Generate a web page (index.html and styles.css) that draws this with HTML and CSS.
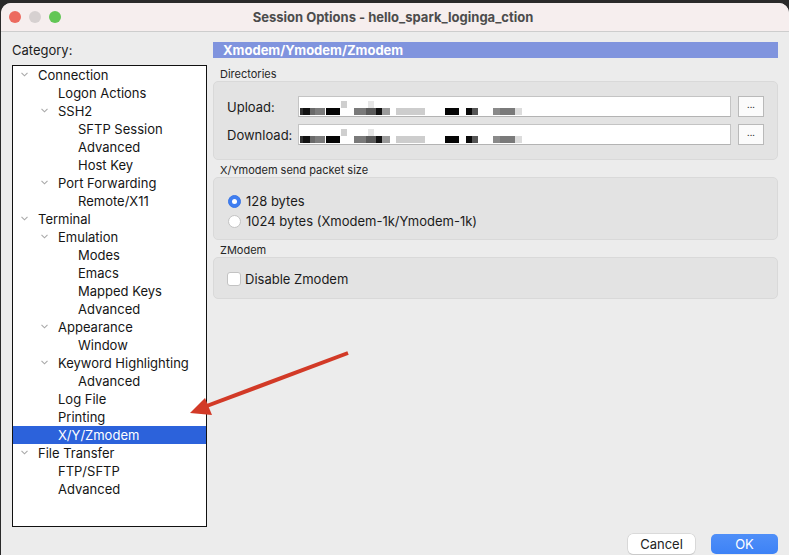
FILE: index.html
```html
<!DOCTYPE html>
<html>
<head>
<meta charset="utf-8">
<link rel="stylesheet" href="styles.css">
</head>
<body>
<div class="window">
  <div class="titlebar">
    <div class="lights">
      <span class="light red"></span>
      <span class="light gray"></span>
      <span class="light green"></span>
    </div>
    <div class="title">Session Options - hello_spark_loginga_ction</div>
  </div>
  <div class="body">
    <div class="main">
      <div class="left">
        <div class="cat-label">Category:</div>
        <div class="tree">
          <div class="row l0"><span class="chev"><svg width="7" height="5" viewBox="0 0 7 5"><polyline points="0.5,0.8 3.5,3.8 6.5,0.8"/></svg></span>Connection</div>
          <div class="row l1"><span class="chev"></span>Logon Actions</div>
          <div class="row l1"><span class="chev"><svg width="7" height="5" viewBox="0 0 7 5"><polyline points="0.5,0.8 3.5,3.8 6.5,0.8"/></svg></span>SSH2</div>
          <div class="row l2"><span class="chev"></span>SFTP Session</div>
          <div class="row l2"><span class="chev"></span>Advanced</div>
          <div class="row l2"><span class="chev"></span>Host Key</div>
          <div class="row l1"><span class="chev"><svg width="7" height="5" viewBox="0 0 7 5"><polyline points="0.5,0.8 3.5,3.8 6.5,0.8"/></svg></span>Port Forwarding</div>
          <div class="row l2"><span class="chev"></span>Remote/X11</div>
          <div class="row l0"><span class="chev"><svg width="7" height="5" viewBox="0 0 7 5"><polyline points="0.5,0.8 3.5,3.8 6.5,0.8"/></svg></span>Terminal</div>
          <div class="row l1"><span class="chev"><svg width="7" height="5" viewBox="0 0 7 5"><polyline points="0.5,0.8 3.5,3.8 6.5,0.8"/></svg></span>Emulation</div>
          <div class="row l2"><span class="chev"></span>Modes</div>
          <div class="row l2"><span class="chev"></span>Emacs</div>
          <div class="row l2"><span class="chev"></span>Mapped Keys</div>
          <div class="row l2"><span class="chev"></span>Advanced</div>
          <div class="row l1"><span class="chev"><svg width="7" height="5" viewBox="0 0 7 5"><polyline points="0.5,0.8 3.5,3.8 6.5,0.8"/></svg></span>Appearance</div>
          <div class="row l2"><span class="chev"></span>Window</div>
          <div class="row l1"><span class="chev"><svg width="7" height="5" viewBox="0 0 7 5"><polyline points="0.5,0.8 3.5,3.8 6.5,0.8"/></svg></span>Keyword Highlighting</div>
          <div class="row l2"><span class="chev"></span>Advanced</div>
          <div class="row l1"><span class="chev"></span>Log File</div>
          <div class="row l1"><span class="chev"></span>Printing</div>
          <div class="row l1 selected"><span class="chev"></span>X/Y/Zmodem</div>
          <div class="row l0"><span class="chev"><svg width="7" height="5" viewBox="0 0 7 5"><polyline points="0.5,0.8 3.5,3.8 6.5,0.8"/></svg></span>File Transfer</div>
          <div class="row l1"><span class="chev"></span>FTP/SFTP</div>
          <div class="row l1"><span class="chev"></span>Advanced</div>
        </div>
      </div>
      <div class="right">
        <div class="header">Xmodem/Ymodem/Zmodem</div>
        <div class="sec-label first">Directories</div>
        <div class="group dirs">
          <div class="field-row">
            <span class="field-label">Upload:</span>
            <div class="input"><div class="redact"></div></div>
            <div class="browse">...</div>
          </div>
          <div class="field-row">
            <span class="field-label">Download:</span>
            <div class="input"><div class="redact"></div></div>
            <div class="browse">...</div>
          </div>
        </div>
        <div class="sec-label">X/Ymodem send packet size</div>
        <div class="group packet">
          <div class="opt"><span class="radio on"></span>128 bytes</div>
          <div class="opt"><span class="radio"></span>1024 bytes (Xmodem-1k/Ymodem-1k)</div>
        </div>
        <div class="sec-label">ZModem</div>
        <div class="group zmodem">
          <div class="opt"><span class="check"></span>Disable Zmodem</div>
        </div>
      </div>
    </div>
    <div class="footer">
      <div class="btn cancel">Cancel</div>
      <div class="btn ok">OK</div>
    </div>
  </div>
</div>
<svg class="arrow" width="789" height="555" viewBox="0 0 789 555">
  <line x1="348" y1="353" x2="204" y2="407" stroke="#d23a27" stroke-width="4" stroke-linecap="butt"/>
  <polygon points="190,413 205,398 212,415" fill="#d23a27"/>
</svg>
</body>
</html>
```
FILE: styles.css
```css
* { box-sizing: border-box; }
html, body { margin: 0; padding: 0; }
body {
  background: #2a2a2a;
  width: 789px;
  height: 555px;
  overflow: hidden;
  font-family: Inter, "Liberation Sans", Arial, sans-serif;
  font-size: 13px;
  color: #1b1b1b;
  position: relative;
}
.window {
  margin: 3px 0 0 1px;
  width: 788px;
  height: 552px;
  background: #ececec;
  border-radius: 10px 10px 0 0;
  overflow: hidden;
  display: flex;
  flex-direction: column;
}
.titlebar {
  height: 29px;
  flex: none;
  background: #f6eeee;
  border-bottom: 1px solid #cdcdcd;
  position: relative;
  display: flex;
  align-items: center;
  justify-content: center;
}
.lights {
  position: absolute;
  left: 8px;
  top: 8px;
  display: flex;
  gap: 8px;
}
.light { width: 12px; height: 12px; border-radius: 50%; display: block; }
.light.red { background: #ec6a5f; }
.light.gray { background: #d6d0d0; }
.light.green { background: #62c655; }
.title {
  font-weight: 700;
  font-size: 13px;
  color: #4c4c4c;
  margin-left: -4px;
}
.body {
  flex: 1;
  display: flex;
  flex-direction: column;
}
.main {
  display: flex;
  padding: 10px 10px 0 11px;
  gap: 6px;
}
.left { width: 195px; flex: none; }
.cat-label { height: 16px; line-height: 16px; margin-top: 0; }
.tree {
  margin-top: 7px;
  height: 462px;
  background: #fff;
  border: 1px solid #111;
}
.row {
  height: 18px;
  line-height: 18px;
  display: flex;
  align-items: center;
  white-space: nowrap;
  color: #151515;
  padding-bottom: 1px;
}
.row.l0 { padding-left: 8px; }
.row.l1 { padding-left: 28px; }
.row.l2 { padding-left: 48px; }
.chev { width: 17px; flex: none; display: flex; align-items: center; }
.chev svg { display: block; fill: none; stroke: #a9a9a9; stroke-width: 1.1; }
.row.selected { background: #2c62db; color: #fff; }
.right { width: 565px; flex: none; }
.header {
  height: 16px;
  line-height: 16px;
  background: #8094de;
  color: #fff;
  font-weight: 700;
  padding-left: 10px;
}
.sec-label {
  font-size: 11px;
  height: 14px;
  line-height: 14px;
  padding-left: 7px;
  color: #262626;
  margin-top: 3px;
}
.sec-label.first { margin-top: 9px; }
.group {
  background: #e3e3e3;
  border: 1px solid #d9d9d9;
  border-radius: 5px;
  width: 565px;
}
.dirs {
  height: 79px;
  padding: 14px 13px 0 13px;
  display: flex;
  flex-direction: column;
  gap: 7px;
}
.field-row { display: flex; align-items: center; height: 21px; }
.field-label { width: 71px; flex: none; }
.input {
  width: 433px;
  height: 21px;
  background: #fff;
  border: 1px solid #c4c4c4;
  border-bottom-color: #b3b3b3;
  padding-left: 1px;
}
.redact {
  width: 247px;
  height: 19px;
  background:
    linear-gradient(to right,
      #303030 0 3px, #121212 3px 10px, #6a6a6a 10px 15px, #7c7c7c 15px 25px, transparent 25px 26px,
      #050505 26px 40px, transparent 40px 54px, #7a7a7a 54px 66px, #5a5a5a 66px 76px,
      #111 76px 82px, #9b9b9b 82px 90px, transparent 90px 96px, #cdcdcd 96px 125px,
      transparent 125px 145px, #050505 145px 159px, transparent 159px 166px,
      #0a0a0a 166px 172px, #555 172px 178px, transparent 178px 193px,
      #8a8a8a 193px 200px, #7a7a7a 200px 215px, #dcdcdc 215px 222px, transparent 222px) 0 11px / 247px 7px no-repeat,
    linear-gradient(to right,
      transparent 0 41px, #cfcfcf 41px 47px, transparent 47px 68px, #e6e6e6 68px 74px, transparent 74px) 0 4px / 247px 7px no-repeat,
    #fff;
}
.browse {
  margin-left: 7px;
  width: 26px;
  height: 21px;
  background: #fbfbfb;
  border: 1px solid #b9b9b9;
  font-size: 9px;
  line-height: 15px;
  text-align: center;
  color: #333;
}
.packet {
  height: 63px;
  padding: 13px 0 0 14px;
}
.zmodem {
  height: 42px;
  padding: 11px 0 0 13px;
}
.opt {
  height: 20px;
  display: flex;
  align-items: center;
  white-space: nowrap;
}
.radio {
  width: 13px;
  height: 13px;
  border-radius: 50%;
  background: #fff;
  border: 1px solid #c3c3c3;
  margin-right: 5px;
  flex: none;
  position: relative;
}
.radio.on {
  background: #3f7ef1;
  border-color: #3a76e6;
}
.radio.on::after {
  content: "";
  position: absolute;
  left: 3px;
  top: 3px;
  width: 5px;
  height: 5px;
  border-radius: 50%;
  background: #fff;
}
.check {
  width: 14px;
  height: 14px;
  border-radius: 3px;
  background: #fff;
  border: 1px solid #c3c3c3;
  margin-right: 4px;
  flex: none;
}
.footer {
  display: flex;
  justify-content: flex-end;
  gap: 16px;
  padding: 7px 11px 0 0;
}
.btn {
  width: 67px;
  height: 20px;
  line-height: 20px;
  text-align: center;
  border-radius: 5px;
  font-size: 13px;
}
.cancel {
  background: #fff;
  color: #222;
  box-shadow: 0 0 0 0.5px #c8c8c8, 0 1px 1px rgba(0,0,0,0.15);
}
.ok {
  background: linear-gradient(#4f8ff8, #3d82f6);
  color: #fff;
}
.arrow {
  position: absolute;
  left: 0;
  top: 0;
  pointer-events: none;
}
```
